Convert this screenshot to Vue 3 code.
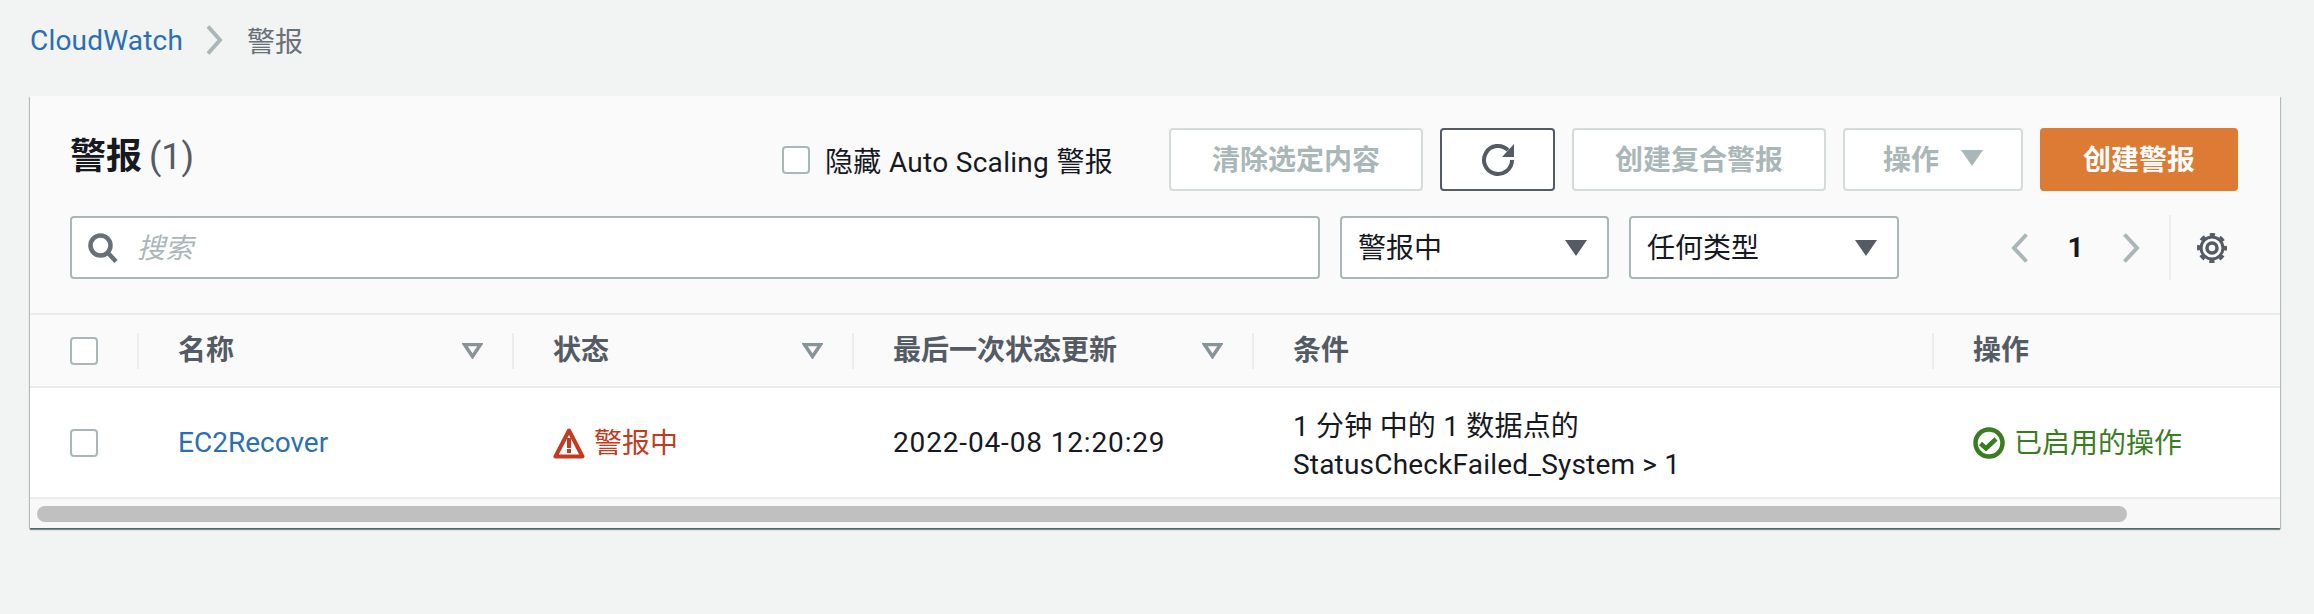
<script setup>
const columns = [
  { label: "名称", sortable: true },
  { label: "状态", sortable: true },
  { label: "最后一次状态更新", sortable: true },
  { label: "条件", sortable: false },
  { label: "操作", sortable: false },
];
</script>

<template>
  <div class="page">
    <nav class="breadcrumb">
      <a class="crumb-link">CloudWatch</a>
      <svg class="crumb-sep" viewBox="0 0 18 30" width="18" height="30">
        <path d="M3 1.5 15 15 3 28.5" fill="none" stroke="#aab7b8" stroke-width="4" />
      </svg>
      <span class="crumb-current">警报</span>
    </nav>

    <section class="card">
      <header class="card-header">
        <div class="top-row">
          <h1 class="title">警报 <span class="count">(1)</span></h1>
          <div class="actions">
            <label class="hide-toggle">
              <span class="checkbox"></span>
              <span>隐藏 Auto Scaling 警报</span>
            </label>
            <button class="btn btn-clear" disabled>清除选定内容</button>
            <button class="btn btn-refresh" aria-label="刷新">
              <svg viewBox="0 0 34 34" width="34" height="34">
                <path d="M27 7.2A14 14 0 1 0 31 17" fill="none" stroke="#545b64" stroke-width="4" />
                <path d="M21 14h12V1z" fill="#545b64" />
              </svg>
            </button>
            <button class="btn btn-composite" disabled>创建复合警报</button>
            <button class="btn btn-menu" disabled>
              操作
              <svg viewBox="0 0 22 16" width="22" height="16"><path d="M0 0h22L11 16z" fill="#aab7b8" /></svg>
            </button>
            <button class="btn btn-primary">创建警报</button>
          </div>
        </div>

        <div class="filter-row">
          <div class="search">
            <svg viewBox="0 0 30 30" width="30" height="30">
              <circle cx="12.5" cy="12.5" r="10" fill="none" stroke="#687078" stroke-width="4.5" />
              <path d="m19.5 19.5 8.5 9" fill="none" stroke="#687078" stroke-width="4.5" />
            </svg>
            <span class="placeholder">搜索</span>
          </div>
          <div class="select select-state">
            <span>警报中</span>
            <svg viewBox="0 0 22 16" width="22" height="16"><path d="M0 0h22L11 16z" fill="#545b64" /></svg>
          </div>
          <div class="select select-type">
            <span>任何类型</span>
            <svg viewBox="0 0 22 16" width="22" height="16"><path d="M0 0h22L11 16z" fill="#545b64" /></svg>
          </div>
          <div class="pager">
            <svg viewBox="0 0 18 30" width="18" height="30">
              <path d="M15.5 1.5 3 15l12.5 13.5" fill="none" stroke="#aab7b8" stroke-width="4" />
            </svg>
            <span class="page-num">1</span>
            <svg viewBox="0 0 18 30" width="18" height="30">
              <path d="M2.5 1.5 15 15 2.5 28.5" fill="none" stroke="#aab7b8" stroke-width="4" />
            </svg>
          </div>
          <div class="settings">
            <svg viewBox="0 0 32 32" width="32" height="32">
              <circle cx="16" cy="16" r="5" fill="none" stroke="#545b64" stroke-width="3.5" />
              <circle cx="16" cy="16" r="11" fill="none" stroke="#545b64" stroke-width="3" />
              <circle
                cx="16"
                cy="16"
                r="13.5"
                fill="none"
                stroke="#545b64"
                stroke-width="3"
                stroke-dasharray="5.3 5.3"
                stroke-dashoffset="2.65"
              />
            </svg>
          </div>
        </div>
      </header>

      <div class="table-head">
        <div class="cell-check"><span class="checkbox"></span></div>
        <div v-for="col in columns" :key="col.label" class="th">
          <div class="th-inner">
            <span class="th-label">{{ col.label }}</span>
            <svg v-if="col.sortable" viewBox="0 0 21 16" width="21" height="16">
              <path d="M2.5 1.5h16L10.5 13.5z" fill="#fff" stroke="#879596" stroke-width="3.5" />
            </svg>
          </div>
        </div>
      </div>

      <div class="table-row">
        <div class="cell-check"><span class="checkbox"></span></div>
        <div class="td"><a class="name-link">EC2Recover</a></div>
        <div class="td status-alarm">
          <svg viewBox="0 0 32 32" width="32" height="32">
            <path d="M16 3.5 2.5 29.5h27z" fill="none" stroke="#c23b1e" stroke-width="4" stroke-linejoin="round" />
            <path d="M14 11h4v10h-4zM14 22h4v4h-4z" fill="#c23b1e" />
          </svg>
          <span class="status-text">警报中</span>
        </div>
        <div class="td date">2022-04-08 12:20:29</div>
        <div class="td condition">
          <div class="condition-line">1 分钟 中的 1 数据点的</div>
          <div class="condition-line">StatusCheckFailed_System &gt; 1</div>
        </div>
        <div class="td status-ok">
          <svg viewBox="0 0 32 32" width="32" height="32">
            <circle cx="16" cy="16" r="13.5" fill="none" stroke="#3a7d1f" stroke-width="4.5" />
            <path d="m7.5 16.5 5.5 5 10-9.5" fill="none" stroke="#3a7d1f" stroke-width="4.5" />
          </svg>
          <span class="status-text">已启用的操作</span>
        </div>
      </div>

      <div class="scroll-track"><div class="scroll-thumb"></div></div>
    </section>
  </div>
</template>

<style>
html,
body {
  margin: 0;
  background: #f2f3f3;
}
</style>

<style scoped>
.page {
  width: 2314px;
  height: 614px;
  overflow: hidden;
  box-sizing: border-box;
  padding: 0 34px 0 30px;
  background: #f2f3f3;
  font-family: Roboto, "Noto Sans CJK SC", sans-serif;
  font-size: 28px;
  color: #16191f;
}

.breadcrumb {
  display: flex;
  align-items: center;
  height: 96px;
  padding-bottom: 16px;
  box-sizing: border-box;
}

.crumb-link {
  color: #2a6fb5;
  letter-spacing: 0.2px;
}

.crumb-sep {
  margin: 0 24px 0 22px;
}

.crumb-current {
  color: #687078;
}

.card {
  background: #fafafa;
  box-shadow: 0 2px 1px 0 rgba(0, 28, 36, 0.45), 1px 1px 1px 0 rgba(0, 28, 36, 0.2), -1px 1px 1px 0 rgba(0, 28, 36, 0.2);
}

.card-header {
  padding: 32px 42px 34px 40px;
  border-bottom: 2px solid #eaeded;
}

.top-row {
  display: flex;
  align-items: center;
  justify-content: space-between;
  height: 63px;
  margin-bottom: 25px;
}

.title {
  margin: 0 0 6px;
  font-size: 36px;
  font-weight: 700;
  line-height: 54px;
}

.count {
  font-weight: 400;
  color: #545b64;
  margin-left: -2px;
}

.actions {
  display: flex;
  align-items: center;
  gap: 17px;
}

.hide-toggle {
  display: flex;
  align-items: center;
  gap: 15px;
  margin-right: 39px;
  letter-spacing: 0.3px;
}

.checkbox {
  display: block;
  box-sizing: border-box;
  width: 28px;
  height: 28px;
  border: 2px solid #aab7b8;
  border-radius: 4px;
  background: #fff;
}

.btn {
  box-sizing: border-box;
  height: 63px;
  padding: 0 0 3px;
  border: 2px solid #d5dbdb;
  border-radius: 4px;
  background: #fff;
  font: inherit;
  font-weight: 700;
  color: #aab7b8;
}

.btn-clear,
.btn-composite {
  width: 254px;
}

.btn-refresh {
  display: flex;
  align-items: center;
  justify-content: center;
  width: 115px;
  padding: 0;
  border-color: #545b64;
}

.btn-menu {
  display: flex;
  align-items: center;
  justify-content: center;
  gap: 22px;
  width: 180px;
}

.btn-primary {
  width: 198px;
  border-color: #dd7a33;
  background: #dd7a33;
  color: #fff;
}

.filter-row {
  display: flex;
  align-items: center;
  height: 63px;
}

.search,
.select {
  display: flex;
  align-items: center;
  box-sizing: border-box;
  height: 63px;
  border: 2px solid #aab7b8;
  border-radius: 4px;
  background: #fff;
}

.search {
  width: 1250px;
  gap: 19px;
  padding-left: 16px;
}

.placeholder {
  margin-bottom: 3px;
  font-style: italic;
  color: #aab7b8;
}

.select {
  justify-content: space-between;
  padding: 0 20px 4px 16px;
}

.select svg {
  margin-top: 4px;
}

.select-state {
  width: 269px;
  margin-left: 20px;
}

.select-type {
  width: 270px;
  margin-left: 20px;
}

.pager {
  display: flex;
  align-items: center;
  box-sizing: border-box;
  margin-left: 112px;
  width: 158px;
  padding-right: 29px;
}

.page-num {
  flex: 1;
  text-align: center;
  font-weight: 700;
}

.settings {
  display: flex;
  align-items: center;
  height: 65px;
  padding-left: 25px;
  border-left: 2px solid #eaeded;
}

.table-head,
.table-row {
  display: grid;
  grid-template-columns: 107px 375px 340px 400px 680px 348px;
  align-items: center;
  box-sizing: border-box;
}

.table-head {
  height: 73px;
  border-bottom: 2px solid #eaeded;
  font-weight: 700;
  color: #545b64;
}

.cell-check {
  padding-left: 40px;
}

.th-inner {
  display: flex;
  align-items: center;
  justify-content: space-between;
  height: 36px;
  padding: 0 29px 0 39px;
  border-left: 2px solid #eaeded;
}

.th-label {
  margin-bottom: 5px;
}

.table-row {
  height: 111px;
  border-bottom: 2px solid #eaeded;
  background: #fff;
}

.td {
  padding-left: 41px;
}

.date {
  letter-spacing: 0.85px;
}

.name-link {
  color: #2a6fb5;
}

.status-alarm,
.status-ok {
  display: flex;
  align-items: center;
  gap: 9px;
}

.status-text {
  margin-bottom: 4px;
}

.status-alarm {
  color: #c23b1e;
}

.status-ok {
  color: #3a7d1f;
}

.condition {
  padding-top: 6px;
  letter-spacing: 0.2px;
}

.condition-line {
  height: 38px;
  line-height: 38px;
}

.scroll-track {
  padding: 7px 0 6px 7px;
  background: #f8f8f8;
}

.scroll-thumb {
  width: 2090px;
  height: 16px;
  border-radius: 8px;
  background: #c0c0c0;
}
</style>
